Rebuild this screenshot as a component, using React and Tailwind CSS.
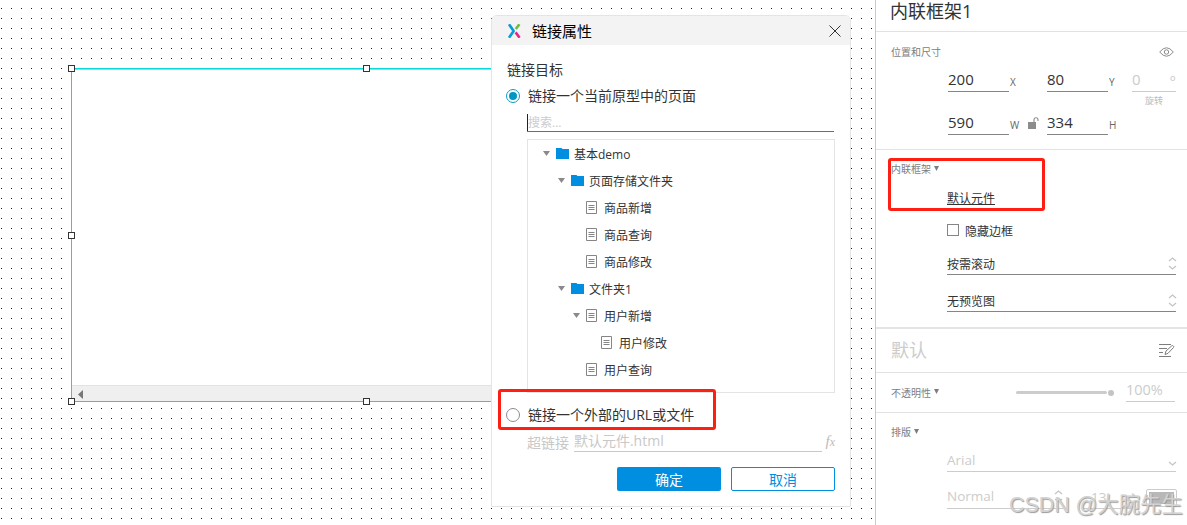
import React, { useState } from 'react'
import clsx from 'clsx'

const pages = [
  { id: 1, level: 0, type: 'folder', name: '基本demo', open: true },
  { id: 2, level: 1, type: 'folder', name: '页面存储文件夹', open: true },
  { id: 3, level: 2, type: 'page', name: '商品新增' },
  { id: 4, level: 2, type: 'page', name: '商品查询' },
  { id: 5, level: 2, type: 'page', name: '商品修改' },
  { id: 6, level: 1, type: 'folder', name: '文件夹1', open: true },
  { id: 7, level: 2, type: 'page', name: '用户新增', open: true },
  { id: 8, level: 3, type: 'page', name: '用户修改' },
  { id: 9, level: 2, type: 'page', name: '用户查询' }
]

const indents = ['pl-[15px]', 'pl-[30px]', 'pl-[45px]', 'pl-[60px]']

const Caret = ({ className }) => (
  <svg viewBox="0 0 7 6" preserveAspectRatio="none" className={className} fill="currentColor">
    <path d="M0 0h7L3.5 6z" />
  </svg>
)

const FolderIcon = () => (
  <svg width="13" height="11" viewBox="0 0 13 11" fill="#008fe0">
    <path d="M0 0h5.5l1 1H13v10H0z" />
  </svg>
)

const PageIcon = () => (
  <svg width="11" height="13" viewBox="0 0 11 13" fill="none" stroke="#858585">
    <path d="M.5.5h10v12H.5zM2.5 4.5h6M2.5 6.5h6M2.5 8.5h6" />
  </svg>
)

const UpDown = ({ className }) => (
  <svg width="9" height="13" viewBox="0 0 9 13" fill="none" stroke="#c4c4c4" strokeWidth="1.3" className={className}>
    <path d="M1 4l3.5-3L8 4M1 9l3.5 3L8 9" />
  </svg>
)

const Handle = ({ className }) => (
  <div className={clsx('absolute w-[7px] h-[7px] border border-[#333] bg-white', className)} />
)

const Radio = ({ checked, onChange, className, children }) => (
  <label className={clsx('flex items-center h-5 text-sm leading-5 text-[#333]', className)} onClick={onChange}>
    <span
      className={clsx(
        'flex items-center justify-center w-[14px] h-[14px] mr-2 rounded-full border bg-white',
        checked ? 'border-[#0e9dc2]' : 'border-[#8c8c8c]'
      )}
    >
      {checked && <span className="w-2 h-2 rounded-full bg-[#0098c3]" />}
    </span>
    {children}
  </label>
)

const InlineFrame = () => (
  <div className="absolute left-[71px] top-[68px] w-[590px] h-[334px] border border-[#0cd9dc] bg-white flex flex-col justify-between">
    <div className="h-px bg-[#c4c4c4]" />
    <div className="h-4 border-t border-[#e2e2e2] bg-[#efefef] pl-[6px] flex items-center">
      <svg width="5" height="9" viewBox="0 0 5 9" fill="#777" className="mt-[2px]">
        <path d="M5 0v9L0 4.5z" />
      </svg>
    </div>
    <Handle className="-left-1 -top-1" />
    <Handle className="left-[291px] -top-1" />
    <Handle className="-left-1 top-[163px]" />
    <Handle className="-left-1 -bottom-1" />
    <Handle className="left-[291px] -bottom-1" />
  </div>
)

const LinkDialog = () => {
  const [target, setTarget] = useState('page')

  return (
    <div className="absolute left-[491px] top-[15px] w-[360px] h-[492px] rounded-t-md border border-[#e4e4e4] bg-white overflow-hidden">
      <div className="flex items-center h-[29px] pl-[15px] pr-[9px] bg-[#f3f3f3]">
        <svg width="14" height="14" viewBox="0 0 14 14" fill="none" strokeWidth="2.6">
          <path d="M2 0.3L6.4 6.6Q6.8 7 6.4 7.4L2 13.7" stroke="#0b9bd7" />
          <path d="M8.8 5L12.4 0.3" stroke="#6cb944" />
          <path d="M8.6 8.4L12.6 13.7" stroke="#e6248b" />
        </svg>
        <span className="ml-[11px] text-[15px] leading-5 text-black">链接属性</span>
        <svg width="12" height="12" viewBox="0 0 12 12" fill="none" stroke="#333" className="ml-auto">
          <path d="M.5.5l11 11M11.5.5l-11 11" />
        </svg>
      </div>

      <div className="pl-[15px] pr-[15px] pt-[15px]">
        <p className="text-sm leading-5 text-[#333]">链接目标</p>
        <Radio className="mt-[6px] -ml-px" checked={target === 'page'} onChange={() => setTarget('page')}>
          链接一个当前原型中的页面
        </Radio>

        <div className="ml-5 mr-px mt-2 h-[18px] border-b border-[#008fe0] flex">
          <span className="w-px h-[17px] bg-[#222]" />
          <span className="text-xs leading-[17px] text-[#ccc]">搜索...</span>
        </div>

        <div className="ml-5 mt-[7px] h-[254px] border border-[#e4e4e4]">
          {pages.map(page => (
            <div key={page.id} className={clsx('flex items-center h-[27px]', indents[page.level])}>
              <span className="w-[13px]">
                {page.open && <Caret className="w-[7px] h-[5px] text-[#8a8a8a]" />}
              </span>
              {page.type === 'folder' ? <FolderIcon /> : <PageIcon />}
              <span className={clsx('mt-[2px] text-xs leading-5 text-[#333]', page.type === 'folder' ? 'ml-[5px]' : 'ml-[7px]')}>
                {page.name}
              </span>
            </div>
          ))}
        </div>

        <Radio className="mt-3 -ml-px" checked={target === 'url'} onChange={() => setTarget('url')}>
          链接一个外部的URL或文件
        </Radio>

        <div className="flex items-start ml-5 mt-[6px] h-[21px] text-sm text-[#c8c8c8]">
          <span className="w-[47px] leading-[24px]">超链接</span>
          <span className="w-[248px] h-[21px] border-b border-[#c8c8c8] leading-5">默认元件.html</span>
          <span className="ml-1 leading-[21px] italic text-[15px] text-[#bbb] font-['Liberation_Serif',serif]">
            f<span className="text-[12px]">x</span>
          </span>
        </div>

        <div className="flex justify-end gap-[10px] mt-[15px] text-sm">
          <button className="w-[104px] h-6 pt-px rounded-[2px] bg-[#008fe0] leading-[23px] text-white">确定</button>
          <button className="w-[104px] h-6 pt-px rounded-[2px] border border-[#008fe0] leading-[21px] text-[#008fe0]">取消</button>
        </div>
      </div>
    </div>
  )
}

const NumberField = ({ value, unit }) => (
  <div className="flex items-end">
    <span className="w-[61px] h-[22px] border-b border-[#858585] text-[15px] leading-[19px] text-[#333]">{value}</span>
    <span className="ml-px text-[10px] leading-[20px] text-[#666]">{unit}</span>
  </div>
)

const SelectField = ({ value, className }) => (
  <div className={clsx('flex justify-between ml-14 w-[229px] h-[21px] border-b border-[#858585]', className)}>
    <span className="text-xs leading-[22px] text-[#333]">{value}</span>
    <UpDown className="mt-[3px] -mr-[1px]" />
  </div>
)

const SectionTitle = ({ children }) => (
  <div className="flex items-center h-4 text-[10px] leading-4 text-[#7d7d7d]">
    {children}
    <Caret className="w-[5px] h-[5px] ml-[3px] mb-[2px]" />
  </div>
)

const Inspector = () => (
  <aside className="w-[312px] shrink-0 border-l border-[#ccc] bg-white overflow-hidden">
    <div className="h-8 pl-[14px] border-b border-[#e2e2e2] text-[18px] leading-[22px] text-[#333]">内联框架1</div>

    {/* Position and size */}
    <div className="h-[118px] pl-[15px] border-b border-[#e2e2e2]">
      <div className="flex items-center justify-between pt-3 pr-[13px] h-7 text-[10px] leading-4 text-[#7d7d7d]">
        位置和尺寸
        <svg width="15" height="10" viewBox="0 0 15 10" fill="none" stroke="#8c8c8c">
          <path d="M.7 5Q7.5-3.5 14.3 5Q7.5 13.5.7 5z" />
          <circle cx="7.5" cy="5" r="2.2" />
        </svg>
      </div>
      <div className="flex ml-[57px] mt-[10px]">
        <div className="w-[99px]"><NumberField value="200" unit="X" /></div>
        <div className="w-[85px]"><NumberField value="80" unit="Y" /></div>
        <div className="w-11">
          <div className="flex justify-between h-[22px] border-b border-[#ccc] text-[15px] leading-[19px] text-[#ccc]">
            0<span className="leading-[23px]">°</span>
          </div>
          <p className="text-center text-[9px] leading-[18px] text-[#bbb]">旋转</p>
        </div>
      </div>
      <div className="flex ml-[57px] mt-[3px] items-end">
        <div className="w-20"><NumberField value="590" unit="W" /></div>
        <svg width="11" height="12" viewBox="0 0 11 12" className="mr-2 mb-[6px]">
          <path d="M0 5h8v7H0z" fill="#8c8c8c" />
          <path d="M6 5V2.8a2 2 0 0 1 4 0V4" fill="none" stroke="#8c8c8c" strokeWidth="1.1" />
        </svg>
        <NumberField value="334" unit="H" />
      </div>
    </div>

    {/* Inline frame */}
    <div className="h-[179px] pl-[15px] pt-[11px] border-b-2 border-[#e4e4e4]">
      <SectionTitle>内联框架</SectionTitle>
      <p className="ml-14 mt-[11px] h-5 flex text-xs text-[#333]">
        <span className="border-b border-[#333] h-[17px] pt-1 leading-[13px]">默认元件</span>
      </p>
      <label className="flex items-center ml-14 mt-[13px] h-5 text-xs text-[#333]">
        <span className="w-3 h-3 mr-[6px] -mt-[2px] border border-[#858585] bg-white" />
        <span className="mt-[2px]">隐藏边框</span>
      </label>
      <SelectField value="按需滚动" className="mt-[13px]" />
      <SelectField value="无预览图" className="mt-4" />
    </div>

    {/* Style */}
    <div className="flex items-center justify-between h-11 pl-[15px] pr-[12px] border-b border-[#e2e2e2] text-[18px] text-[#ccc]">
      默认
      <svg width="16" height="14" viewBox="0 0 16 14" fill="none" stroke="#7d7d7d">
        <path d="M0 .5h12M0 4.5h8M0 8.5h4M0 12.5h12" />
        <path d="M6 10.5l1-3.5 5.8-5.2q.7-.6 1.5.1t.2 1.6L9 9.3z" />
      </svg>
    </div>

    <div className="flex items-center h-10 pl-[15px] border-b border-[#e2e2e2]">
      <SectionTitle>不透明性</SectionTitle>
      <div className="flex items-center gap-px ml-[77px]">
        <span className="w-[91px] h-[3px] rounded-full bg-[#ccc]" />
        <span className="w-[6px] h-[6px] rounded-full bg-[#c4c4c4]" />
      </div>
      <span className="ml-3 -mt-[3px] w-[49px] h-[22px] border-b border-[#ccc] text-[14.5px] leading-[19px] text-[#ccc]">100%</span>
    </div>

    {/* Typography */}
    <div className="pl-[15px] pt-[11px] text-[#ccc] text-[13.5px]">
      <SectionTitle>排版</SectionTitle>
      <div className="flex justify-between items-center ml-14 mt-[10px] w-[229px] h-[22px] border-b border-[#ccc]">
        Arial
        <svg width="9" height="5" viewBox="0 0 9 5" fill="none" stroke="#c4c4c4" strokeWidth="1.3" className="mt-[5px] -mr-px">
          <path d="M1 1l3.5 3L8 1" />
        </svg>
      </div>
      <div className="flex items-end ml-14 mt-[13px] gap-[20px]">
        <div className="flex justify-between items-center w-[116px] h-6 border-b border-[#ccc]">
          Normal
          <UpDown />
        </div>
        <span className="w-12 pl-2 h-6 leading-6 border-b border-[#ccc]">13</span>
        <span className="w-[31px] h-[18px] ml-[-5px] mb-[2px] p-[2px] rounded-[2px] border border-[#ccc]">
          <span className="block h-full bg-[#b8b8b8]" />
        </span>
      </div>
    </div>
  </aside>
)

const App = () => {
  return (
    <div className="relative flex w-[1187px] h-[525px] overflow-hidden bg-white font-['Open_Sans','Noto_Sans_CJK_SC',sans-serif]">
      <main className="relative flex-1 bg-[radial-gradient(circle_at_1.5px_8.5px,#0000ff_0.7px,transparent_0.7px)] bg-[length:10px_10px]">
        <InlineFrame />
        <LinkDialog />
      </main>
      <Inspector />

      {/* Callouts */}
      <div className="absolute left-[498px] top-[389px] w-[218px] h-[41px] rounded-[3px] border-3 border-[#ff1e12]" />
      <div className="absolute left-[888px] top-[158px] w-[157px] h-[53px] rounded-[3px] border-3 border-[#ff1e12]" />
      <div className="absolute left-[1009px] top-[491px] whitespace-nowrap text-[21.4px] leading-7 text-[#d2d2d2] [text-shadow:1px_1px_1px_#999] font-['Liberation_Sans','Noto_Sans_CJK_SC',sans-serif]">
        CSDN @大腕先生
      </div>
    </div>
  )
}

export default App
